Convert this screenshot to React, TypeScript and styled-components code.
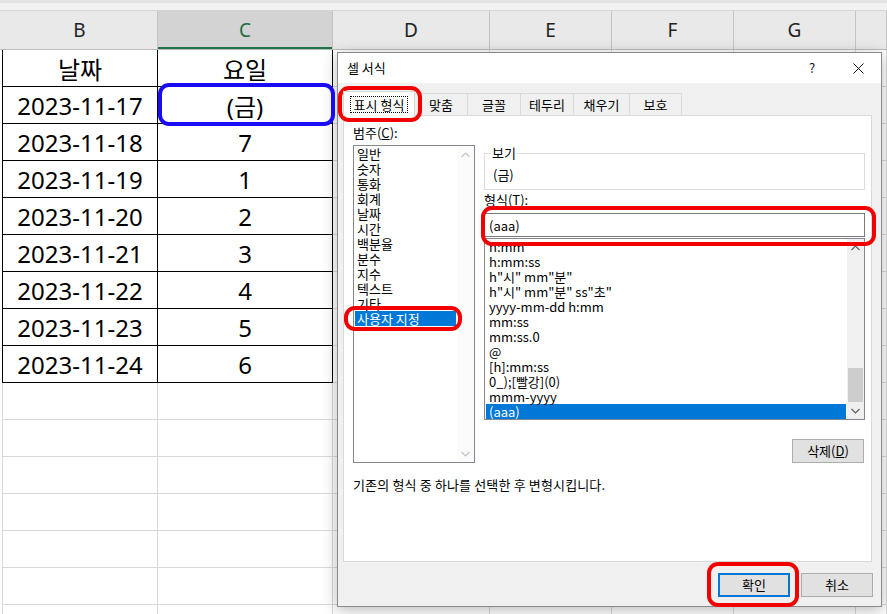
import React from "react";
import styled, { createGlobalStyle } from "styled-components";

const GlobalStyle = createGlobalStyle`
  html, body {
    margin: 0;
    padding: 0;
    background: #fff;
  }
  body {
    font-family: "Noto Sans", "Noto Sans CJK KR", sans-serif;
    overflow: hidden;
  }
  * {
    box-sizing: border-box;
  }
`;

const COLUMNS = "2px 156px 175px 157px 122px 122px 122px 1fr";

const rows: [string, string][] = [
  ["날짜", "요일"],
  ["2023-11-17", "(금)"],
  ["2023-11-18", "7"],
  ["2023-11-19", "1"],
  ["2023-11-20", "2"],
  ["2023-11-21", "3"],
  ["2023-11-22", "4"],
  ["2023-11-23", "5"],
  ["2023-11-24", "6"],
];

const categories = [
  "일반",
  "숫자",
  "통화",
  "회계",
  "날짜",
  "시간",
  "백분율",
  "분수",
  "지수",
  "텍스트",
  "기타",
  "사용자 지정",
];

const formats = [
  "h:mm",
  "h:mm:ss",
  'h"시" mm"분"',
  'h"시" mm"분" ss"초"',
  "yyyy-mm-dd h:mm",
  "mm:ss",
  "mm:ss.0",
  "@",
  "[h]:mm:ss",
  "0_);[빨강](0)",
  "mmm-yyyy",
  "(aaa)",
];

const tabs = [
  { label: "표시 형식", w: 72 },
  { label: "맞춤", w: 53 },
  { label: "글꼴", w: 53 },
  { label: "테두리", w: 53 },
  { label: "채우기", w: 56 },
  { label: "보호", w: 52 },
];

const Page = styled.div`
  position: relative;
  width: 887px;
  height: 614px;
  overflow: hidden;
  background: #fff;
`;

const TopStrip = styled.div`
  height: 11px;
  background: #f2f2f2;
  border-top: 3px solid #e3e3e3;
  border-bottom: 1px solid #d4d4d4;
`;

const HeaderRow = styled.div`
  display: grid;
  grid-template-columns: ${COLUMNS};
  height: 39px;
  background: #e9e9e9;
  border-bottom: 1px solid #bcbcbc;
`;

const ColHeader = styled.div<{ $selected?: boolean }>`
  display: flex;
  align-items: center;
  justify-content: center;
  font-size: 19px;
  color: ${(p) => (p.$selected ? "#1d6d40" : "#222")};
  background: ${(p) => (p.$selected ? "#d3d3d3" : "transparent")};
  border-right: 1px solid #c4c4c4;
  box-shadow: ${(p) => (p.$selected ? "inset 0 -2px 0 #217346" : "none")};
`;

const SheetRow = styled.div`
  display: grid;
  grid-template-columns: ${COLUMNS};
  height: 37px;
`;

const Cell = styled.div<{ $table?: boolean; $first?: boolean }>`
  display: flex;
  align-items: center;
  justify-content: center;
  font-size: 24px;
  color: #000;
  border-right: 1px solid ${(p) => (p.$table ? "#000" : "#d9d9d9")};
  border-bottom: 1px solid ${(p) => (p.$table ? "#000" : "#d9d9d9")};
  border-left: ${(p) =>
    p.$first ? `1px solid ${p.$table ? "#000" : "#d9d9d9"}` : "none"};
`;

const Dialog = styled.div`
  position: absolute;
  left: 337px;
  top: 52px;
  width: 545px;
  height: 555px;
  border: 1px solid #8a8a8a;
  background: #f0f0f0;
  box-shadow: 0 3px 14px rgba(0, 0, 0, 0.28);
  display: flex;
  flex-direction: column;
  font-family: "Noto Sans CJK KR", sans-serif;
  font-size: 13px;
  line-height: 16px;
  color: #000;
`;

const TitleBar = styled.div`
  height: 30px;
  background: #fff;
  display: flex;
  align-items: center;
  padding-left: 9px;
`;

const Title = styled.div`
  flex: 1;
`;

const TitleButton = styled.div`
  width: 46px;
  height: 30px;
  display: flex;
  align-items: center;
  justify-content: center;
  font-size: 13px;
  color: #111;
`;

const TabStrip = styled.div`
  height: 32px;
  display: flex;
  align-items: flex-end;
  padding-left: 5px;
`;

const Tab = styled.div<{ $active?: boolean; $w: number }>`
  position: relative;
  z-index: ${(p) => (p.$active ? 1 : 0)};
  width: ${(p) => p.$w}px;
  height: ${(p) => (p.$active ? 25 : 22)}px;
  margin-bottom: ${(p) => (p.$active ? "-1px" : "0")};
  display: flex;
  align-items: center;
  justify-content: center;
  background: ${(p) => (p.$active ? "#fff" : "#f0f0f0")};
  border: 1px solid #d9d9d9;
  border-bottom: none;
  border-left-width: ${(p) => (p.$active ? "1px" : "0")};
`;

const FocusRect = styled.span`
  border: 1px dotted #000;
  padding: 0 3px;
  line-height: 15px;
`;

const Panel = styled.div`
  height: 447px;
  margin: 0 9px 0 5px;
  background: #fff;
  border: 1px solid #d9d9d9;
  padding: 0 6px 0 9px;
`;

const PanelGrid = styled.div`
  display: grid;
  grid-template-columns: 122px 381px;
  column-gap: 9px;
`;

const Column = styled.div`
  display: flex;
  flex-direction: column;
`;

const FieldLabel = styled.div<{ $top: number; $bottom: number }>`
  margin-top: ${(p) => p.$top}px;
  margin-bottom: ${(p) => p.$bottom}px;
  line-height: 16px;
`;

const ListBox = styled.div<{ $h: number; $gap?: number }>`
  height: ${(p) => p.$h}px;
  margin-top: ${(p) => p.$gap ?? 0}px;
  border: 1px solid #828790;
  background: #fff;
  display: flex;
`;

const ListItems = styled.div`
  flex: 1;
  padding: 0 1px;
`;

const ListItem = styled.div<{ $selected?: boolean; $pad: number }>`
  height: 15px;
  line-height: 15px;
  padding-left: ${(p) => p.$pad}px;
  white-space: nowrap;
  background: ${(p) => (p.$selected ? "#0078d7" : "transparent")};
  color: ${(p) => (p.$selected ? "#fff" : "#000")};
`;

const ScrollBar = styled.div<{ $disabled?: boolean }>`
  width: 17px;
  display: flex;
  flex-direction: column;
  background: ${(p) => (p.$disabled ? "#fbfbfb" : "#f0f0f0")};
  color: ${(p) => (p.$disabled ? "#c4c4c4" : "#606060")};
`;

const ScrollArrow = styled.div`
  height: 17px;
  display: flex;
  align-items: center;
  justify-content: center;
`;

const ScrollTrack = styled.div`
  flex: 1;
  display: flex;
  flex-direction: column;
  justify-content: flex-end;
  padding: 0 1px;
`;

const ScrollThumb = styled.div<{ $h: number }>`
  height: ${(p) => p.$h}px;
  background: #cdcdcd;
`;

const Preview = styled.fieldset`
  margin: 29px 0 0;
  padding: 6px 9px 6px 6px;
  border: 1px solid #dcdcdc;
  min-width: 0;
`;

const PreviewLegend = styled.legend`
  padding: 0 1px;
  line-height: 16px;
`;

const PreviewText = styled.div`
  padding-left: 2px;
  line-height: 16px;
`;

const FormatInput = styled.input`
  height: 24px;
  width: 100%;
  margin: 0;
  border: 1px solid #7a7a7a;
  padding: 0 4px;
  font: inherit;
  color: #000;
  background: #fff;
  outline: none;
`;

const RightButtons = styled.div<{ $top: number; $right: number }>`
  display: flex;
  justify-content: flex-end;
  gap: 11px;
  margin-top: ${(p) => p.$top}px;
  padding-right: ${(p) => p.$right}px;
`;

const Button = styled.button<{ $focused?: boolean }>`
  width: 72px;
  height: 24px;
  padding: 0;
  font: inherit;
  color: #000;
  background: #e1e1e1;
  border: 1px solid ${(p) => (p.$focused ? "#0078d7" : "#adadad")};
  box-shadow: ${(p) => (p.$focused ? "inset 0 0 0 1px #0078d7" : "none")};
`;

const Description = styled.div`
  margin-top: 14px;
  line-height: 16px;
  letter-spacing: 0.15px;
`;

const Mark = styled.div<{ $x: number; $y: number; $w: number; $h: number; $color: string }>`
  position: absolute;
  left: ${(p) => p.$x}px;
  top: ${(p) => p.$y}px;
  width: ${(p) => p.$w}px;
  height: ${(p) => p.$h}px;
  border: 4px solid ${(p) => p.$color};
  border-radius: 11px;
  pointer-events: none;
`;

const Chevron = ({ up }: { up?: boolean }) => (
  <svg width="9" height="6" viewBox="0 0 9 6">
    <polyline
      points={up ? "0.5,5 4.5,1 8.5,5" : "0.5,1 4.5,5 8.5,1"}
      fill="none"
      stroke="currentColor"
      strokeWidth="1.2"
    />
  </svg>
);

const CloseIcon = () => (
  <svg width="11" height="11" viewBox="0 0 11 11">
    <path d="M0.5 0.5 L10.5 10.5 M10.5 0.5 L0.5 10.5" stroke="#111" strokeWidth="1" />
  </svg>
);

export default function App() {
  const emptyRows = Array.from({ length: 7 });
  const headers = ["B", "C", "D", "E", "F", "G", ""];

  return (
    <Page>
      <GlobalStyle />
      <TopStrip />
      <HeaderRow>
        <div />
        {headers.map((h, i) => (
          <ColHeader key={i} $selected={h === "C"}>
            {h}
          </ColHeader>
        ))}
      </HeaderRow>

      {rows.map(([date, day], i) => (
        <SheetRow key={i}>
          <div />
          <Cell $table $first>
            {date}
          </Cell>
          <Cell $table>{day}</Cell>
          <Cell />
          <Cell />
          <Cell />
          <Cell />
          <Cell />
        </SheetRow>
      ))}
      {emptyRows.map((_, i) => (
        <SheetRow key={`e${i}`}>
          <div />
          <Cell $first />
          <Cell />
          <Cell />
          <Cell />
          <Cell />
          <Cell />
          <Cell />
        </SheetRow>
      ))}

      <Dialog>
        <TitleBar>
          <Title>셀 서식</Title>
          <TitleButton>?</TitleButton>
          <TitleButton>
            <CloseIcon />
          </TitleButton>
        </TitleBar>

        <TabStrip>
          {tabs.map((t, i) => (
            <Tab key={t.label} $w={t.w} $active={i === 0}>
              {i === 0 ? <FocusRect>{t.label}</FocusRect> : t.label}
            </Tab>
          ))}
        </TabStrip>

        <Panel>
          <PanelGrid>
            <Column>
              <FieldLabel $top={9} $bottom={4}>
                범주(<u>C</u>):
              </FieldLabel>
              <ListBox $h={318}>
                <ListItems>
                  {categories.map((c) => (
                    <ListItem key={c} $pad={2} $selected={c === "사용자 지정"}>
                      {c}
                    </ListItem>
                  ))}
                </ListItems>
                <ScrollBar $disabled>
                  <ScrollArrow>
                    <Chevron up />
                  </ScrollArrow>
                  <ScrollTrack />
                  <ScrollArrow>
                    <Chevron />
                  </ScrollArrow>
                </ScrollBar>
              </ListBox>
            </Column>

            <Column>
              <Preview>
                <PreviewLegend>보기</PreviewLegend>
                <PreviewText>(금)</PreviewText>
              </Preview>
              <FieldLabel $top={2} $bottom={5}>
                형식(<u>T</u>):
              </FieldLabel>
              <FormatInput value="(aaa)" readOnly />
              <ListBox $h={182} $gap={1}>
                <ListItems>
                  {formats.map((f) => (
                    <ListItem key={f} $pad={3} $selected={f === "(aaa)"}>
                      {f}
                    </ListItem>
                  ))}
                </ListItems>
                <ScrollBar>
                  <ScrollArrow>
                    <Chevron up />
                  </ScrollArrow>
                  <ScrollTrack>
                    <ScrollThumb $h={34} />
                  </ScrollTrack>
                  <ScrollArrow>
                    <Chevron />
                  </ScrollArrow>
                </ScrollBar>
              </ListBox>
              <RightButtons $top={19} $right={1}>
                <Button>
                  삭제(<u>D</u>)
                </Button>
              </RightButtons>
            </Column>
          </PanelGrid>
          <Description>기존의 형식 중 하나를 선택한 후 변형시킵니다.</Description>
        </Panel>

        <RightButtons $top={11} $right={8}>
          <Button $focused>확인</Button>
          <Button>취소</Button>
        </RightButtons>
      </Dialog>

      <Mark $x={158} $y={83} $w={177} $h={43} $color="#1a0cf2" />
      <Mark $x={338} $y={86} $w={84} $h={36} $color="#f20000" />
      <Mark $x={344} $y={306} $w={118} $h={25} $color="#f20000" />
      <Mark $x={481} $y={206} $w={395} $h={40} $color="#f20000" />
      <Mark $x={707} $y={562} $w={92} $h={45} $color="#f20000" />
    </Page>
  );
}
